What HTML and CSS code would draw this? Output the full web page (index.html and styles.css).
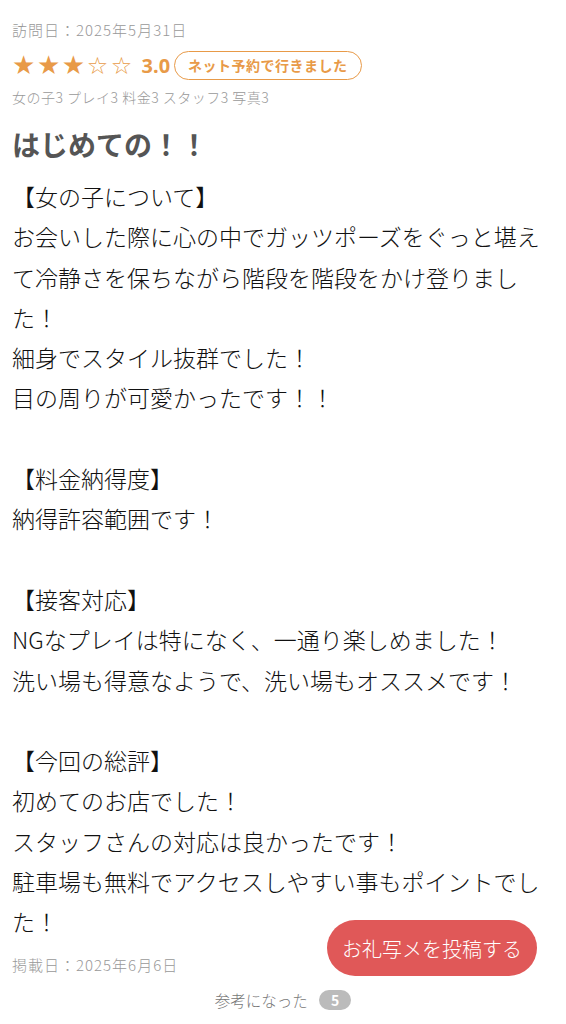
FILE: index.html
```html
<!DOCTYPE html>
<html lang="ja">
<head>
<meta charset="utf-8">
<link rel="stylesheet" href="styles.css">
</head>
<body>
<div class="review">
  <div class="visit">訪問日：2025年5月31日</div>
  <div class="rating-row">
    <span class="stars"><span class="on">★★★</span><span class="off">☆☆</span></span>
    <span class="score">3.0</span>
    <span class="badge">ネット予約で行きました</span>
  </div>
  <div class="subscores">女の子3 プレイ3 料金3 スタッフ3 写真3</div>
  <h1 class="title">はじめての！！</h1>
  <div class="body">【女の子について】
お会いした際に心の中でガッツポーズをぐっと堪えて冷静さを保ちながら階段を階段をかけ登りました！
細身でスタイル抜群でした！
目の周りが可愛かったです！！

【料金納得度】
納得許容範囲です！

【接客対応】
NGなプレイは特になく、一通り楽しめました！
洗い場も得意なようで、洗い場もオススメです！

【今回の総評】
初めてのお店でした！
スタッフさんの対応は良かったです！
駐車場も無料でアクセスしやすい事もポイントでした！</div>
  <div class="posted">掲載日：2025年6月6日</div>
  <div class="helpful"><span>参考になった</span><span class="count">5</span></div>
</div>
<a class="cta">お礼写メを投稿する</a>
</body>
</html>
```
FILE: styles.css
```css
html, body {
  margin: 0;
  padding: 0;
  background: #fff;
}
body {
  font-family: "Noto Sans CJK JP", "Noto Sans", sans-serif;
  color: #222;
}
.review {
  padding: 19px 12px 0 12px;
}
.visit {
  font-size: 15px;
  line-height: 22px;
  letter-spacing: 1px;
  color: #999;
  font-weight: 300;
}
.rating-row {
  display: flex;
  align-items: center;
  margin-top: 8px;
  height: 32px;
}
.stars {
  color: #e89a48;
  font-size: 26px;
  line-height: 1;
  letter-spacing: 1.6px;
  font-family: "DejaVu Sans", sans-serif;
}
.stars .off {
  font-size: 24px;
  letter-spacing: 2.4px;
}
.score {
  color: #e89a48;
  font-weight: 700;
  font-size: 20px;
  margin-left: 7px;
  font-family: "Noto Sans", sans-serif;
}
.badge {
  margin-left: 4px;
  border: 1.5px solid #e89a48;
  border-radius: 16px;
  color: #e89a48;
  font-weight: 700;
  font-size: 14px;
  letter-spacing: 0.5px;
  line-height: 27px;
  padding: 0 13px;
}
.subscores {
  margin-top: 6px;
  font-size: 14px;
  line-height: 20px;
  letter-spacing: 0.5px;
  color: #999;
  font-weight: 300;
}
.title {
  margin: 17px 0 0 0;
  font-size: 28px;
  line-height: 40px;
  font-weight: 700;
  color: #555;
}
.body {
  margin-top: 12px;
  font-size: 23px;
  line-height: 40.3px;
  white-space: pre-wrap;
  word-break: break-all;
  font-weight: 300;
  color: #111;
}
.posted {
  margin-top: 12px;
  font-size: 15px;
  line-height: 22px;
  letter-spacing: 1px;
  color: #999;
  font-weight: 300;
}
.helpful {
  display: flex;
  justify-content: center;
  align-items: center;
  gap: 11px;
  margin-top: 13px;
  font-size: 15.5px;
  color: #777;
  font-weight: 300;
}
.count {
  background: #bbb;
  color: #fff;
  font-weight: 700;
  font-size: 14px;
  line-height: 20px;
  border-radius: 10px;
  padding: 0 12px;
}
.cta {
  position: fixed;
  left: 327px;
  top: 920px;
  width: 210px;
  height: 56px;
  border-radius: 28px;
  background: #e05858;
  color: #fff;
  font-size: 20px;
  font-weight: 300;
  display: flex;
  align-items: center;
  justify-content: center;
}
```
